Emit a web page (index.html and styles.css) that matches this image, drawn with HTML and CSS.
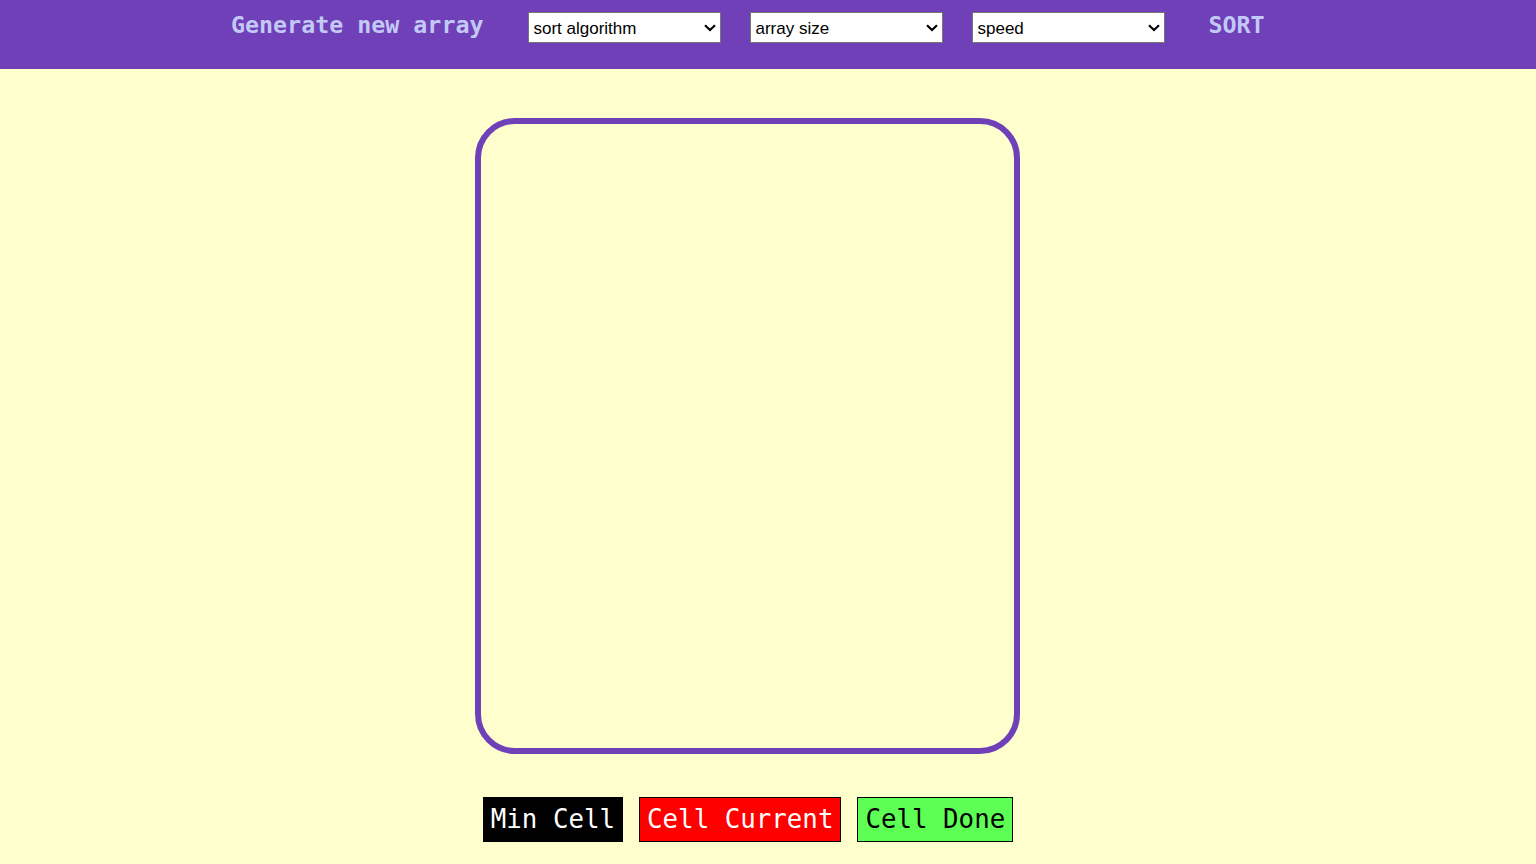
FILE: index.html
```html
<!DOCTYPE html>
<html>
<head>
<meta charset="utf-8">
<link rel="stylesheet" href="styles.css">
</head>
<body>
<header class="topbar">
  <span class="nav-link gen">Generate new array</span>
  <select class="picker"><option>sort algorithm</option></select>
  <select class="picker"><option>array size</option></select>
  <select class="picker"><option>speed</option></select>
  <span class="nav-link sort">SORT</span>
</header>
<main class="stage">
  <div class="board"></div>
  <div class="legend">
    <span class="chip chip-min">Min Cell</span>
    <span class="chip chip-cur">Cell Current</span>
    <span class="chip chip-done">Cell Done</span>
  </div>
</main>
</body>
</html>
```

FILE: styles.css
```css
html, body {
  margin: 0;
  padding: 0;
}
body {
  background: #ffffcd;
  font-family: "DejaVu Sans Mono", monospace;
  width: 1536px;
  height: 864px;
  overflow: hidden;
}
.topbar {
  height: 69px;
  background: #6f40b7;
  display: flex;
  align-items: flex-start;
  padding-left: 231px;
  box-sizing: border-box;
}
.nav-link {
  font-family: "DejaVu Sans Mono", monospace;
  font-weight: bold;
  font-size: 23.3px;
  color: #c3c9f6;
  line-height: 27px;
  margin-top: 11px;
}
.gen {
  margin-right: 45px;
}
.sort {
  margin-left: 43px;
}
.picker {
  -webkit-appearance: none;
  appearance: none;
  width: 193px;
  height: 31px;
  margin-top: 12px;
  margin-right: 29px;
  font-family: "Liberation Sans", Arial, sans-serif;
  font-size: 17px;
  color: #000;
  border: 1px solid #767676;
  border-radius: 0;
  padding: 1px 24px 0 4px;
  background-color: #fff;
  background-image: url("data:image/svg+xml;utf8,<svg xmlns='http://www.w3.org/2000/svg' width='12' height='8' viewBox='0 0 12 8'><path d='M1 1.2 L6 6 L11 1.2' fill='none' stroke='black' stroke-width='2.2'/></svg>");
  background-repeat: no-repeat;
  background-position: right 4px center;
  background-size: 12px 8px;
}
.picker:last-of-type {
  margin-right: 0;
}
.stage {
  margin-left: 475px;
  width: 545px;
  padding-top: 49px;
  display: flex;
  flex-direction: column;
  align-items: center;
}
.board {
  width: 545px;
  height: 636px;
  box-sizing: border-box;
  border: 6px solid #6f40b7;
  border-radius: 40px;
}
.legend {
  margin-top: 43px;
  margin-left: 1px;
  display: flex;
  gap: 16px;
}
.chip {
  font-family: "DejaVu Sans Mono", monospace;
  font-size: 25.8px;
  line-height: 43px;
  height: 45px;
  box-sizing: border-box;
  padding: 0 7px;
  border: 1px solid #000;
  white-space: pre;
}
.chip-min {
  background: #000;
  color: #fff;
}
.chip-cur {
  background: #ff0000;
  color: #fff;
}
.chip-done {
  background: #5dff55;
  color: #000;
}
```
